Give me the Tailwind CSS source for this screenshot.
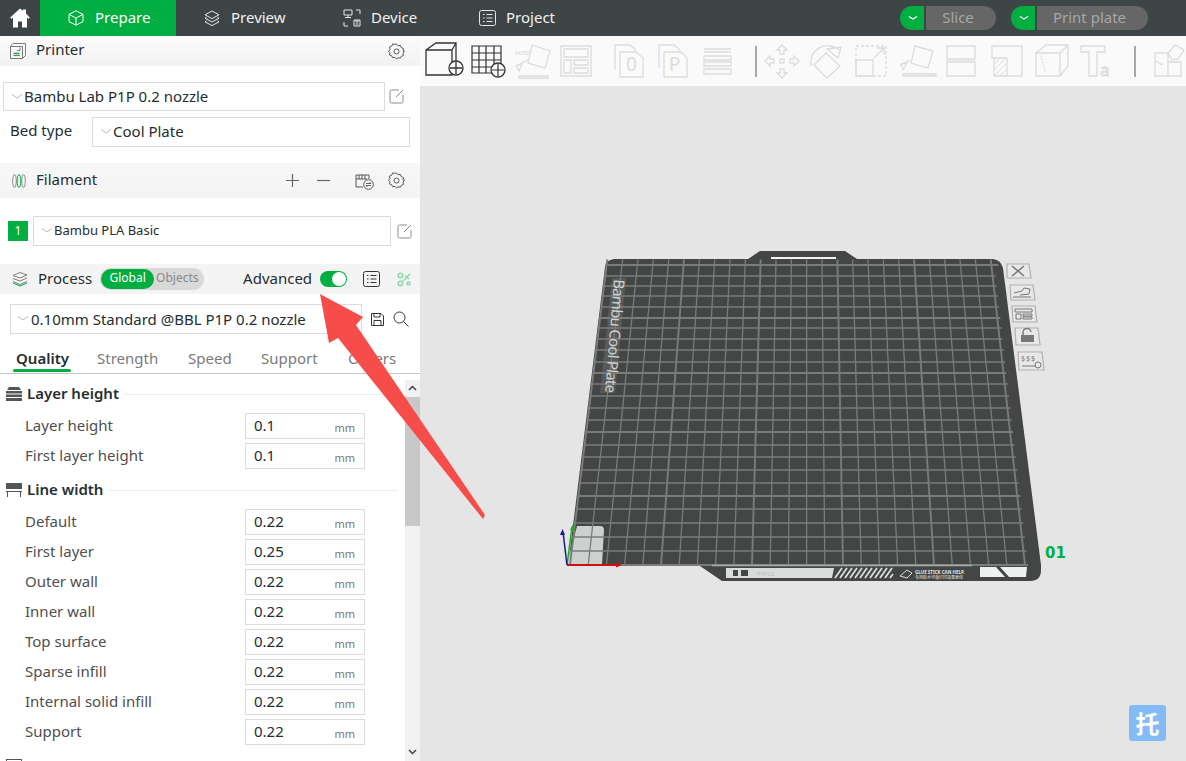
<!DOCTYPE html>
<html lang="en">
<head>
<meta charset="UTF-8">
<title>Bambu Studio</title>
<script src="https://cdn.jsdelivr.net/npm/@tailwindcss/browser@4"></script>
</head>
<body class="w-[1186px] h-[761px] overflow-hidden bg-[#e5e5e5] font-['Noto_Sans',sans-serif] text-[15px] text-[#262e30]">

<!-- top bar -->
<header class="h-9 bg-[#3d4547] flex items-center text-[#f2f2f2] [&_span]:mb-[2px]">
  <div class="w-10 h-9 flex items-center justify-center">
    <svg width="20" height="20" viewBox="0 0 20 20"><path d="M10 .5 .2 9.6 1.4 11 3 9.6V19.5h5v-6h4v6h5V9.6l1.6 1.4 1.2-1.4L16 5.6V1.5h-3v1.3z" fill="#fff"/></svg>
  </div>
  <div class="w-[136px] h-9 bg-[#00ae42] flex items-center pl-7 gap-[11px] text-white">
    <svg width="16" height="16" viewBox="0 0 16 16" fill="none" stroke="#fff" stroke-width="1"><path d="M8 .8 15 4.4v7.2L8 15.2 1 11.6V4.4zM1 4.4 8 8l7-3.6M8 8v7"/></svg>
    <span>Prepare</span>
  </div>
  <div class="w-[136px] flex items-center pl-7 gap-[11px]">
    <svg width="16" height="17" viewBox="0 0 16 17" fill="none" stroke="#e6e6e6" stroke-width="1"><path d="M8 1 15 4.8 8 8.6 1 4.8zM2.6 7.2 1 8.2l7 3.8 7-3.8-1.6-1M2.6 10.8 1 11.8l7 3.8 7-3.8-1.6-1"/></svg>
    <span>Preview</span>
  </div>
  <div class="w-[136px] flex items-center pl-[31px] gap-[10px]">
    <svg width="18" height="18" viewBox="0 0 18 18" fill="none" stroke="#e6e6e6" stroke-width="1"><path d="M1 1h8v5H1zM5 6v3M2 8.500h6M1 13v4h4M13 1h4v4M11 11h6v6h-6zM13 11v2h2v-2M12.500 15h3"/></svg>
    <span>Device</span>
  </div>
  <div class="w-[136px] flex items-center pl-[31px] gap-[10px]">
    <svg width="17" height="16" viewBox="0 0 17 16" fill="none" stroke="#e6e6e6" stroke-width="1"><rect x=".5" y=".5" width="16" height="15" rx="2"/><path d="M4 4.500h1.500M7.500 4.500h6M4 8h1.500M7.500 8h6M4 11.500h1.500M7.500 11.500h6"/></svg>
    <span>Project</span>
  </div>
  <div class="ml-[316px] flex items-center h-6">
    <div class="w-6 h-6 bg-[#00ae42] rounded-l-full flex items-center justify-center pl-0.5">
      <svg width="10" height="6" viewBox="0 0 10 6" fill="none" stroke="#fff" stroke-width="1.200"><path d="M1 1.500 5 4l4-2.500"/></svg>
    </div>
    <div class="ml-0.5 w-[70px] h-6 bg-[#666] rounded-r-full flex items-center justify-center pr-1.5 pb-0.5 text-[#a6a6a6]">Slice</div>
  </div>
  <div class="ml-[15px] flex items-center h-6">
    <div class="w-6 h-6 bg-[#00ae42] rounded-l-full flex items-center justify-center pl-0.5">
      <svg width="10" height="6" viewBox="0 0 10 6" fill="none" stroke="#fff" stroke-width="1.200"><path d="M1 1.500 5 4l4-2.500"/></svg>
    </div>
    <div class="ml-0.5 w-[111px] h-6 bg-[#666] rounded-r-full flex items-center justify-center pr-1.5 pb-0.5 text-[#a6a6a6]">Print plate</div>
  </div>
</header>

<div class="flex h-[725px]">
  <!-- left panel -->
  <aside class="w-[420px] h-[725px] bg-white overflow-hidden shrink-0 [&_span]:mb-[2px]">
    <div class="h-[30px] bg-gradient-to-b from-[#fbfbfb] to-[#f2f2f2] flex items-center pl-[10px]">
      <svg width="16" height="16" viewBox="0 0 16 16" fill="none" stroke="#7d7d7d"><path d="M.5 3.500h12v12H.500zM.5 3.500 3 .5h12.500v12l-3 3M3.500 12.500h6.500" /><path d="M3.500 10.500h6" stroke="#00ae42" stroke-width="1.500"/><path d="M7 7.500h3V4.500"/></svg>
      <span class="ml-[10px] !mb-[4px]">Printer</span>
      <svg class="ml-auto mr-[15px]" width="17" height="17" viewBox="0 0 17 17" fill="none" stroke="#5a5a5a"><path d="M8.500 1 10 2.800l2.400-.4.800 2.200 2.300.9-.5 2.500 1.500 0-1.500 2.100.5 2.400-2.300.9-.8 1.800-2.400-.4L8.500 16 7 14.300l-2.400.4-.8-1.800-2.300-.9.500-2.400L.5 8.500 2 6.500l-.5-2.500 2.300-.9.800-2.200 2.400.4z"/><circle cx="8.500" cy="8.500" r="2.500"/></svg>
    </div>

    <div class="mt-4 flex items-center">
      <div class="ml-[3px] w-[382px] h-[29px] border border-[#dcdcdc] flex items-center pl-2 gap-[2px]">
        <svg width="10" height="6" viewBox="0 0 10 6" fill="none" stroke="#b5b5b5"><path d="M0 .5 5 4l5-3.500"/></svg>
        <span class="!mb-0">Bambu Lab P1P 0.2 nozzle</span>
      </div>
      <svg class="ml-[4px]" width="15" height="15" viewBox="0 0 15 15" fill="none" stroke="#8c8c8c"><path d="M10 1H2.500A1.500 1.500 0 0 0 1 2.500v10A1.500 1.500 0 0 0 2.500 14h10a1.500 1.500 0 0 0 1.500-1.500V6M7 8l7-7"/></svg>
    </div>
    <div class="mt-[6px] flex items-center h-[30px]">
      <span class="ml-[10px] w-[82px] !mb-[4px]">Bed type</span>
      <div class="w-[318px] h-[30px] border border-[#dcdcdc] flex items-center pl-2 gap-[2px]">
        <svg width="10" height="6" viewBox="0 0 10 6" fill="none" stroke="#b5b5b5"><path d="M0 .5 5 4l5-3.500"/></svg>
        <span>Cool Plate</span>
      </div>
    </div>

    <div class="mt-4 h-[35px] bg-gradient-to-b from-[#f7f7f7] to-[#f4f4f4] flex items-center pl-3">
      <svg width="14" height="16" viewBox="0 0 14 16" fill="none" stroke-width="1"><ellipse cx="2.500" cy="8" rx="1.800" ry="6.500" stroke="#8c8c8c"/><ellipse cx="7" cy="8" rx="1.800" ry="6.500" stroke="#00ae42"/><ellipse cx="11.500" cy="8" rx="1.800" ry="6.500" stroke="#8c8c8c"/></svg>
      <span class="ml-[10px]">Filament</span>
      <svg class="ml-[189px]" width="13" height="13" viewBox="0 0 13 13" stroke="#666" stroke-width="1.200"><path d="M6.500 0v13M0 6.500h13"/></svg>
      <svg class="ml-[18px]" width="13" height="13" viewBox="0 0 13 13" stroke="#666" stroke-width="1.200"><path d="M0 6.500h13"/></svg>
      <svg class="ml-[25px]" width="19" height="18" viewBox="0 0 19 18" fill="none" stroke="#555"><path d="M1 12V3h13v4M1 7h11M1 12v3h7M4 3v4M7 3v4M10 3v4" /><circle cx="13.500" cy="12.500" r="4.800" fill="#f6f6f6"/><path d="M11 11.500h5l-1.500-1.500M16 13.500h-5l1.500 1.500" stroke-width=".9"/></svg>
      <svg class="ml-[14px]" width="17" height="17" viewBox="0 0 17 17" fill="none" stroke="#5a5a5a"><path d="M8.500 1 10 2.800l2.400-.4.800 2.200 2.300.9-.5 2.500 1.500 0-1.500 2.100.5 2.400-2.300.9-.8 1.800-2.400-.4L8.500 16 7 14.300l-2.400.4-.8-1.800-2.300-.9.500-2.400L.5 8.500 2 6.500l-.5-2.500 2.300-.9.800-2.200 2.400.4z"/><circle cx="8.500" cy="8.500" r="2.500"/></svg>
    </div>

    <div class="mt-[18px] flex items-center">
      <div class="ml-2 w-5 h-5 bg-[#00ae42] text-white text-[12px] flex items-center justify-center">1</div>
      <div class="ml-[5px] w-[358px] h-[30px] border border-[#dcdcdc] flex items-center pl-2 gap-[2px] text-[13px]">
        <svg width="10" height="6" viewBox="0 0 10 6" fill="none" stroke="#b5b5b5"><path d="M0 .5 5 4l5-3.500"/></svg>
        <span class="!mb-0">Bambu PLA Basic</span>
      </div>
      <svg class="ml-[6px]" width="15" height="15" viewBox="0 0 15 15" fill="none" stroke="#8c8c8c"><path d="M10 1H2.500A1.500 1.500 0 0 0 1 2.500v10A1.500 1.500 0 0 0 2.500 14h10a1.500 1.500 0 0 0 1.500-1.500V6M7 8l7-7"/></svg>
    </div>

    <div class="mt-[18px] h-[30px] bg-[#f4f4f4] flex items-center pl-3">
      <svg width="16" height="16" viewBox="0 0 16 16" fill="none" stroke="#7d7d7d"><path d="M8 1.500 15 4 8 7 1 4.500zM1 7.500 8 10l7-3M1 10.500 8 13.500l7-3"/><path d="M1 12 8 15l7-3" stroke="#00ae42"/></svg>
      <span class="ml-[10px]">Process</span>
      <div class="ml-[8px] w-[104px] h-[22px] bg-[#d9d9d9] rounded-full flex items-center text-[12px]">
        <div class="ml-px w-[53px] h-5 bg-[#00ae42] rounded-full text-white flex items-center justify-center pb-0.5">Global</div>
        <span class="ml-0.5 text-[#888]">Objects</span>
      </div>
      <span class="ml-[39px]">Advanced</span>
      <div class="ml-[8px] w-[27px] h-4 bg-[#00ae42] rounded-full flex items-center justify-end pr-px">
        <div class="w-[14px] h-[14px] bg-white rounded-full"></div>
      </div>
      <svg class="ml-4" width="17" height="16" viewBox="0 0 17 16" fill="none" stroke="#333"><rect x=".5" y=".5" width="16" height="15" rx="2"/><path d="M4 4.500h1.500M7.500 4.500h6M4 8h1.500M7.500 8h6M4 11.500h1.500M7.500 11.500h6"/></svg>
      <svg class="ml-[17px]" width="15" height="15" viewBox="0 0 15 15" fill="none" stroke="#8fd9aa" stroke-width="1.500"><circle cx="3.500" cy="3.500" r="2.200"/><circle cx="3.500" cy="11.500" r="2.200"/><circle cx="11.500" cy="11.500" r="1.500"/><path d="M6 9 13 2M8 3.500 12 7"/></svg>
    </div>

    <div class="mt-[10px] flex items-center">
      <div class="ml-[10px] w-[352px] h-[30px] border border-[#dcdcdc] flex items-center pl-[7px] gap-[3px]">
        <svg width="10" height="6" viewBox="0 0 10 6" fill="none" stroke="#b5b5b5"><path d="M0 .5 5 4l5-3.500"/></svg>
        <span class="!mb-0">0.10mm Standard @BBL P1P 0.2 nozzle</span>
      </div>
      <svg class="ml-[9px]" width="13" height="13" viewBox="0 0 13 13" fill="none" stroke="#333"><path d="M.5.5h9.500l2.500 2.500v9.500H.5zM3 .5v3.500h6V.5M3 12.500V7.500h7v5"/></svg>
      <svg class="ml-[9px]" width="16" height="16" viewBox="0 0 16 16" fill="none" stroke="#333"><circle cx="6.500" cy="6.500" r="5.500"/><path d="m10.500 10.500 5 5"/></svg>
    </div>

    <div class="mt-[10px] h-[30px] pt-[3px] border-b border-[#c8c8c8] flex text-[#7b7b7b] relative">
      <span class="ml-4 font-semibold text-[#262e30]">Quality</span>
      <span class="absolute left-[97px] top-[3px]">Strength</span>
      <span class="absolute left-[188px] top-[3px]">Speed</span>
      <span class="absolute left-[261px] top-[3px]">Support</span>
      <span class="absolute left-[348px] top-[3px]">Others</span>
      <div class="absolute left-[13px] top-[25px] w-[58px] h-[3px] bg-[#00ae42] rounded-sm"></div>
    </div>

    <div class="flex">
      <div class="w-[405px] pt-[7px] shrink-0">
        <div class="h-[26px] flex items-center">
          <svg class="ml-[6px]" width="16" height="14" viewBox="0 0 16 14" fill="#555"><path d="M3 0h10l2 3H1zM0 4h16v2.500H0zM0 7.500h16V10H0zM0 11h16v3H0z"/></svg>
          <span class="ml-[5px] font-semibold">Layer height</span>
          <div class="ml-[5px] mr-[7px] h-px flex-1 bg-[#eeeeee]"></div>
        </div>
        <div class="mt-[6px] h-[26px] flex items-center text-[#4f4f4f]"><span class="ml-[25px] w-[220px]">Layer height</span><div class="w-[120px] h-[26px] border border-[#dcdcdc] flex items-center pl-2 pr-[9px] justify-between text-[#262e30]"><span>0.1</span><span class="text-[11px] text-[#777] mt-[6px]">mm</span></div></div>
        <div class="mt-1 h-[26px] flex items-center text-[#4f4f4f]"><span class="ml-[25px] w-[220px]">First layer height</span><div class="w-[120px] h-[26px] border border-[#dcdcdc] flex items-center pl-2 pr-[9px] justify-between text-[#262e30]"><span>0.1</span><span class="text-[11px] text-[#777] mt-[6px]">mm</span></div></div>
        <div class="mt-2 h-[26px] flex items-center">
          <svg class="ml-[6px]" width="16" height="14" viewBox="0 0 16 14" fill="#555"><path d="M0 0h16v6H0zM0 8h16v1H0zM1 9h1v5H1zM14 9h1v5h-1z"/></svg>
          <span class="ml-[5px] font-semibold">Line width</span>
          <div class="ml-[5px] mr-[7px] h-px flex-1 bg-[#eeeeee]"></div>
        </div>
        <div class="mt-[6px] h-[26px] flex items-center text-[#4f4f4f]"><span class="ml-[25px] w-[220px]">Default</span><div class="w-[120px] h-[26px] border border-[#dcdcdc] flex items-center pl-2 pr-[9px] justify-between text-[#262e30]"><span>0.22</span><span class="text-[11px] text-[#777] mt-[6px]">mm</span></div></div>
        <div class="mt-1 h-[26px] flex items-center text-[#4f4f4f]"><span class="ml-[25px] w-[220px]">First layer</span><div class="w-[120px] h-[26px] border border-[#dcdcdc] flex items-center pl-2 pr-[9px] justify-between text-[#262e30]"><span>0.25</span><span class="text-[11px] text-[#777] mt-[6px]">mm</span></div></div>
        <div class="mt-1 h-[26px] flex items-center text-[#4f4f4f]"><span class="ml-[25px] w-[220px]">Outer wall</span><div class="w-[120px] h-[26px] border border-[#dcdcdc] flex items-center pl-2 pr-[9px] justify-between text-[#262e30]"><span>0.22</span><span class="text-[11px] text-[#777] mt-[6px]">mm</span></div></div>
        <div class="mt-1 h-[26px] flex items-center text-[#4f4f4f]"><span class="ml-[25px] w-[220px]">Inner wall</span><div class="w-[120px] h-[26px] border border-[#dcdcdc] flex items-center pl-2 pr-[9px] justify-between text-[#262e30]"><span>0.22</span><span class="text-[11px] text-[#777] mt-[6px]">mm</span></div></div>
        <div class="mt-1 h-[26px] flex items-center text-[#4f4f4f]"><span class="ml-[25px] w-[220px]">Top surface</span><div class="w-[120px] h-[26px] border border-[#dcdcdc] flex items-center pl-2 pr-[9px] justify-between text-[#262e30]"><span>0.22</span><span class="text-[11px] text-[#777] mt-[6px]">mm</span></div></div>
        <div class="mt-1 h-[26px] flex items-center text-[#4f4f4f]"><span class="ml-[25px] w-[220px]">Sparse infill</span><div class="w-[120px] h-[26px] border border-[#dcdcdc] flex items-center pl-2 pr-[9px] justify-between text-[#262e30]"><span>0.22</span><span class="text-[11px] text-[#777] mt-[6px]">mm</span></div></div>
        <div class="mt-1 h-[26px] flex items-center text-[#4f4f4f]"><span class="ml-[25px] w-[220px]">Internal solid infill</span><div class="w-[120px] h-[26px] border border-[#dcdcdc] flex items-center pl-2 pr-[9px] justify-between text-[#262e30]"><span>0.22</span><span class="text-[11px] text-[#777] mt-[6px]">mm</span></div></div>
        <div class="mt-1 h-[26px] flex items-center text-[#4f4f4f]"><span class="ml-[25px] w-[220px]">Support</span><div class="w-[120px] h-[26px] border border-[#dcdcdc] flex items-center pl-2 pr-[9px] justify-between text-[#262e30]"><span>0.22</span><span class="text-[11px] text-[#777] mt-[6px]">mm</span></div></div>
        <div class="mt-2 h-[26px] flex items-center">
          <svg class="ml-[6px]" width="16" height="14" viewBox="0 0 16 14" fill="none" stroke="#555"><rect x=".5" y=".5" width="15" height="13"/></svg>
          <span class="ml-[5px] font-semibold">Seam</span>
        </div>
      </div>
      <!-- scrollbar -->
      <div class="w-[15px] h-[387px] mt-[6px] bg-[#f1f1f1] flex flex-col items-center">
        <svg class="mt-[5px]" width="9" height="6" viewBox="0 0 9 6" fill="none" stroke="#444" stroke-width="1.500"><path d="m1 5 3.500-3.500L8 5"/></svg>
        <div class="mt-[6px] w-[15px] h-[129px] bg-[#c8c8c8]"></div>
        <svg class="mt-[223px]" width="9" height="6" viewBox="0 0 9 6" fill="none" stroke="#444" stroke-width="1.500"><path d="m1 1 3.500 3.500L8 1"/></svg>
      </div>
    </div>
  </aside>

  <!-- viewport -->
  <main class="w-[766px] h-[725px] relative">
    <div class="h-[50px] bg-[#fafafa] flex overflow-hidden">
      <svg width="48" height="50" viewBox="420 36 48 50" fill="none" stroke="#333" stroke-width="1.300"><path d="M426 50h26v25h-26zM426 50l10-7h20v22l-4 10M452 50l4-7"/><circle cx="456" cy="68" r="7" fill="#fafafa"/><path d="M450 68h12M456 62v12"/></svg>
      <svg width="42" height="50" viewBox="468 36 42 50" fill="none" stroke="#333" stroke-width="1.200"><path d="M472 46h29v27h-29zM479 46v27M486 46v27M494 46v27M472 53h29M472 60h29M472 67h29"/><circle cx="498" cy="70" r="7" fill="#fafafa" stroke-width="1.300"/><path d="M492 70h12M498 64v12"/></svg>
      <svg width="45" height="50" viewBox="510 36 45 50" fill="none" stroke="#dcdcdc" stroke-width="1.300"><path d="m532 45 18 6-5 17-17-5zM528 60l-12 6M516 66l3 5 3-7zM519 76h29v2h-29z"/><text x="515" y="55" font-size="5" font-weight="700" fill="#dcdcdc" stroke="none">AUTO</text></svg>
      <svg width="45" height="50" viewBox="555 36 45 50" fill="none" stroke="#dcdcdc" stroke-width="1.300"><path d="M561 46h30v30h-30zM564 49h24v8h-24zM564 60h7v13h-7zM574 60h14v5h-14zM574 68h14v5h-14z"/></svg>
      <svg width="50" height="50" viewBox="600 36 50 50" fill="none" stroke="#dcdcdc" stroke-width="1.300"><path d="M615 70V45h15l5 4v3M620 52h16l7 6v19h-23z"/><text x="626" y="71" font-size="19" fill="#dcdcdc" stroke="none">0</text></svg>
      <svg width="45" height="50" viewBox="650 36 45 50" fill="none" stroke="#dcdcdc" stroke-width="1.300"><path d="M659 68V45h15l5 4v3M664 52h17l6 6v19h-23z"/><text x="669" y="71" font-size="19" fill="#dcdcdc" stroke="none">P</text></svg>
      <svg width="50" height="50" viewBox="695 36 50 50" fill="none" stroke="#dcdcdc" stroke-width="1.300"><path d="M704 49h27M704 52h27M704 56h27v4h-27zM704 62h27v4h-27zM704 69h27v5h-27z"/></svg>
      <div class="w-[15px] flex items-center pl-[10px]"><div class="w-[2px] h-[31px] bg-[#a8a8a8]"></div></div>
      <svg width="45" height="50" viewBox="760 36 45 50" fill="none" stroke="#dcdcdc" stroke-width="1.300"><path d="m782 45 5 5h-3v4h-4v-4h-3zM782 78l5-5h-3v-4h-4v4h-3zM765 61l5-5v3h4v4h-4v3zM799 61l-5-5v3h-4v4h4v3z"/><rect x="780" y="59" width="4" height="4"/></svg>
      <svg width="45" height="50" viewBox="805 36 45 50" fill="none" stroke="#dcdcdc" stroke-width="1.300"><path d="M811 66a17 17 0 0 1 28-16M827 49l14-2-3 11zM826 53l14 13-13 12-13-13z"/></svg>
      <svg width="45" height="50" viewBox="850 36 45 50" fill="none" stroke="#dcdcdc" stroke-width="1.300"><path d="M856 46h30v30h-30z" stroke-dasharray="3 2"/><path d="M856 60h17v16h-17zM874 58l10-10M877 48h7v7"/></svg>
      <svg width="45" height="50" viewBox="895 36 45 50" fill="none" stroke="#dcdcdc" stroke-width="1.300"><path d="m915 46 18 5-5 17-17-5zM910 60l-10 5M901 64l2 6 4-7zM903 74h33v2h-33z"/></svg>
      <svg width="45" height="50" viewBox="940 36 45 50" fill="none" stroke="#dcdcdc" stroke-width="1.300"><path d="M947 46h28v13h-28zM947 62h28v14h-28z"/><path d="M947 60.500h28" stroke-dasharray="1.500 1.500"/></svg>
      <svg width="45" height="50" viewBox="985 36 45 50" fill="none" stroke="#dcdcdc" stroke-width="1.300"><path d="M992 46h30v30h-15V58h-15zM994 58h13v18h-13z"/><path d="M994 64l6-6M994 70l12-12M994 76l13-13M1000 76l7-7" stroke-width="1"/></svg>
      <svg width="45" height="50" viewBox="1030 36 45 50" fill="none" stroke="#dcdcdc" stroke-width="1.300"><path d="M1036 53h24v23h-24zM1036 53l10-8h22v21l-8 10M1060 53l8-8"/><path d="m1041 56 3 10 1 6" stroke-dasharray="1.500 1.500"/></svg>
      <svg width="50" height="50" viewBox="1075 36 50 50" fill="none" stroke="#dcdcdc" stroke-width="1.300"><path d="M1081 46h24v6h-8v24h-8V52h-8z"/><text x="1100" y="76" font-size="17" fill="#fafafa" stroke="#dcdcdc" stroke-width="1">a</text></svg>
      <div class="w-[20px] flex items-center pl-[9px]"><div class="w-[2px] h-[31px] bg-[#a8a8a8]"></div></div>
      <svg width="41" height="50" viewBox="1145 36 41 50" fill="none" stroke="#dcdcdc" stroke-width="1.300"><path d="M1155 53h13v23h-13zM1168 62h13v14h-13zM1168 53l7-8 9 5-6 9-6 1zM1155 62c4-2 4 4 8 2"/></svg>
    </div>

    <svg id="plate" class="absolute left-0 top-[50px]" width="766" height="675" viewBox="420 86 766 675" fill="none">
      <path d="M614 259H748L760 251H845L857 259H993Q1001 260 1003 268L1041 565V570Q1041 581 1030 581H722L700 566H568L605 267Q606 260 614 259Z" fill="#444645"/>
      <path d="M771 258h65" stroke="#f2f2f2" stroke-width="2"/>
      <path d="M612 278h14l-11 115h-15z" fill="#565a59"/>
      <path d="M577 526h23q4 0 4 4l-2 34.500h-35z" fill="#ccd0ce"/>
      <g id="grid" stroke="#7a7c7b"></g>
      <text transform="translate(614 279) rotate(94.500)" font-size="15" textLength="114" fill="#cfd3d1" stroke="none" font-family="Noto Sans">Bambu Cool Plate</text>
      <path d="M712 565.500h260" stroke="#a9acaa" stroke-width="1.500"/>
      <path d="M726 568h108l-2 10H726z" fill="#d9dcda"/>
      <path d="M733 570h5v6h-5zM741 570h7v6h-7z" fill="#444645"/>
      <text x="757" y="576" font-size="5" fill="#b5b8b6">P1P 0.2</text>
      <path d="m835 578 7-10M840 578l7-10M845 578l7-10M850 578l7-10M855 578l7-10M860 578l7-10M865 578l7-10M870 578l7-10M875 578l7-10M880 578l7-10M885 578l7-10M890 578l3-4" stroke="#d9dcda" stroke-width="1.800"/>
      <path d="m900 576 7-6 5 3-5 5z" stroke="#d9dcda"/>
      <text x="915" y="574" font-size="4.500" font-weight="700" fill="#e4e6e5">GLUE STICK CAN HELP.</text>
      <text x="915" y="578.500" font-size="4" fill="#e4e6e5" font-family="Noto Sans CJK SC">专用胶水可使打印效果更佳</text>
      <path d="M980 567h16l9 10h-25zM1000 567h27l-1 10h-17z" fill="#eef0ef"/>
      <text x="1045" y="558" font-size="15" font-weight="700" fill="#00ae42" font-family="DejaVu Sans">01</text>
      <path d="M567 565h53" stroke="#d01010" stroke-width="1.800"/><path d="m622 565-6-2.500v5z" fill="#d01010"/>
      <path d="m567 565 5-38" stroke="#1cb01c" stroke-width="1.500"/><path d="m573 524-3 6h5z" fill="#1cb01c"/>
      <path d="m567 565-4-33" stroke="#1a1a90" stroke-width="1.500"/><path d="m562.500 529-2.500 6h5z" fill="#1a1a90"/>

      <g fill="#e8e8e8" stroke="#b0b0b0" stroke-width="1.200">
        <path d="M1007 264h22l2 14h-23q-1 0-1-1z"/><path d="M1010 285h23l2 15h-24z"/><path d="M1012 306h23l2 16h-24z"/><path d="M1015 328h23l2 17h-24z"/><path d="M1018 352h24l2 18h-25z"/>
      </g>
      <path d="m1012 266 12 10M1024 266l-12 10" stroke="#777" stroke-width="1.500"/>
      <path d="M1013 297h18M1014 293l8-2 2-3 6 1-1 5-9 1" stroke="#777"/>
      <path d="M1015 309h17v3h-17zM1016 314h5v5h-5zM1023 314h9v2h-9zM1023 317h9v2h-9z" stroke="#777"/>
      <path d="M1021 335h13v7h-13z" fill="#777"/><path d="M1023 335v-2a4 4 0 0 1 8-1" stroke="#777" stroke-width="1.500"/>
      <text x="1021" y="361" font-size="7" fill="#777" stroke="none" letter-spacing="1">$$$</text>
      <path d="M1022 366h14" stroke="#777"/><circle cx="1038" cy="365" r="3" stroke="#777"/>
    </svg>

    <div class="absolute left-[709px] top-[669px] w-[37px] h-9 bg-[#82bbf6] rounded-[3px] flex items-center justify-center text-white text-[24px] font-bold font-['Noto_Sans_CJK_SC',sans-serif]">托</div>
  </main>
</div>

<!-- annotation arrow -->
<svg class="absolute left-0 top-0 pointer-events-none" width="1186" height="761" viewBox="0 0 1186 761"><path d="M320 294 363 317 356 325 485 515 483 519 338 338 329 343Z" fill="#f74d4a"/></svg>

<script>
  // plate grid: 25 x 25 cells, every fifth line a bit stronger
  const rows = [265,276,286,296,307,318,328,339,350,362,373,384,396,408,420,432,445,457,470,483,496,509,523,537,551,565];
  const grid = document.getElementById("grid");
  const xAt = (i, y) => {
    const top = 607 + 15.36 * i, bottom = 570 + 18.2 * i;
    return top + (bottom - top) * (y - 262) / 303;
  };
  const line = (x1, y1, x2, y2, strong) => {
    const l = document.createElementNS("http://www.w3.org/2000/svg", "line");
    l.setAttribute("x1", x1); l.setAttribute("y1", y1);
    l.setAttribute("x2", x2); l.setAttribute("y2", y2);
    l.setAttribute("stroke-width", strong ? 1.9 : 1.3);
    grid.appendChild(l);
  };
  for (let i = 0; i <= 25; i++) line(xAt(i, 259.5), 259.5, xAt(i, 565), 565, i % 5 === 0);
  rows.forEach((y, i) => line(xAt(0, y) - 1, y, xAt(25, y) + (i === 0 ? 7 : 3), y, i % 5 === 0));
</script>
</body>
</html>
